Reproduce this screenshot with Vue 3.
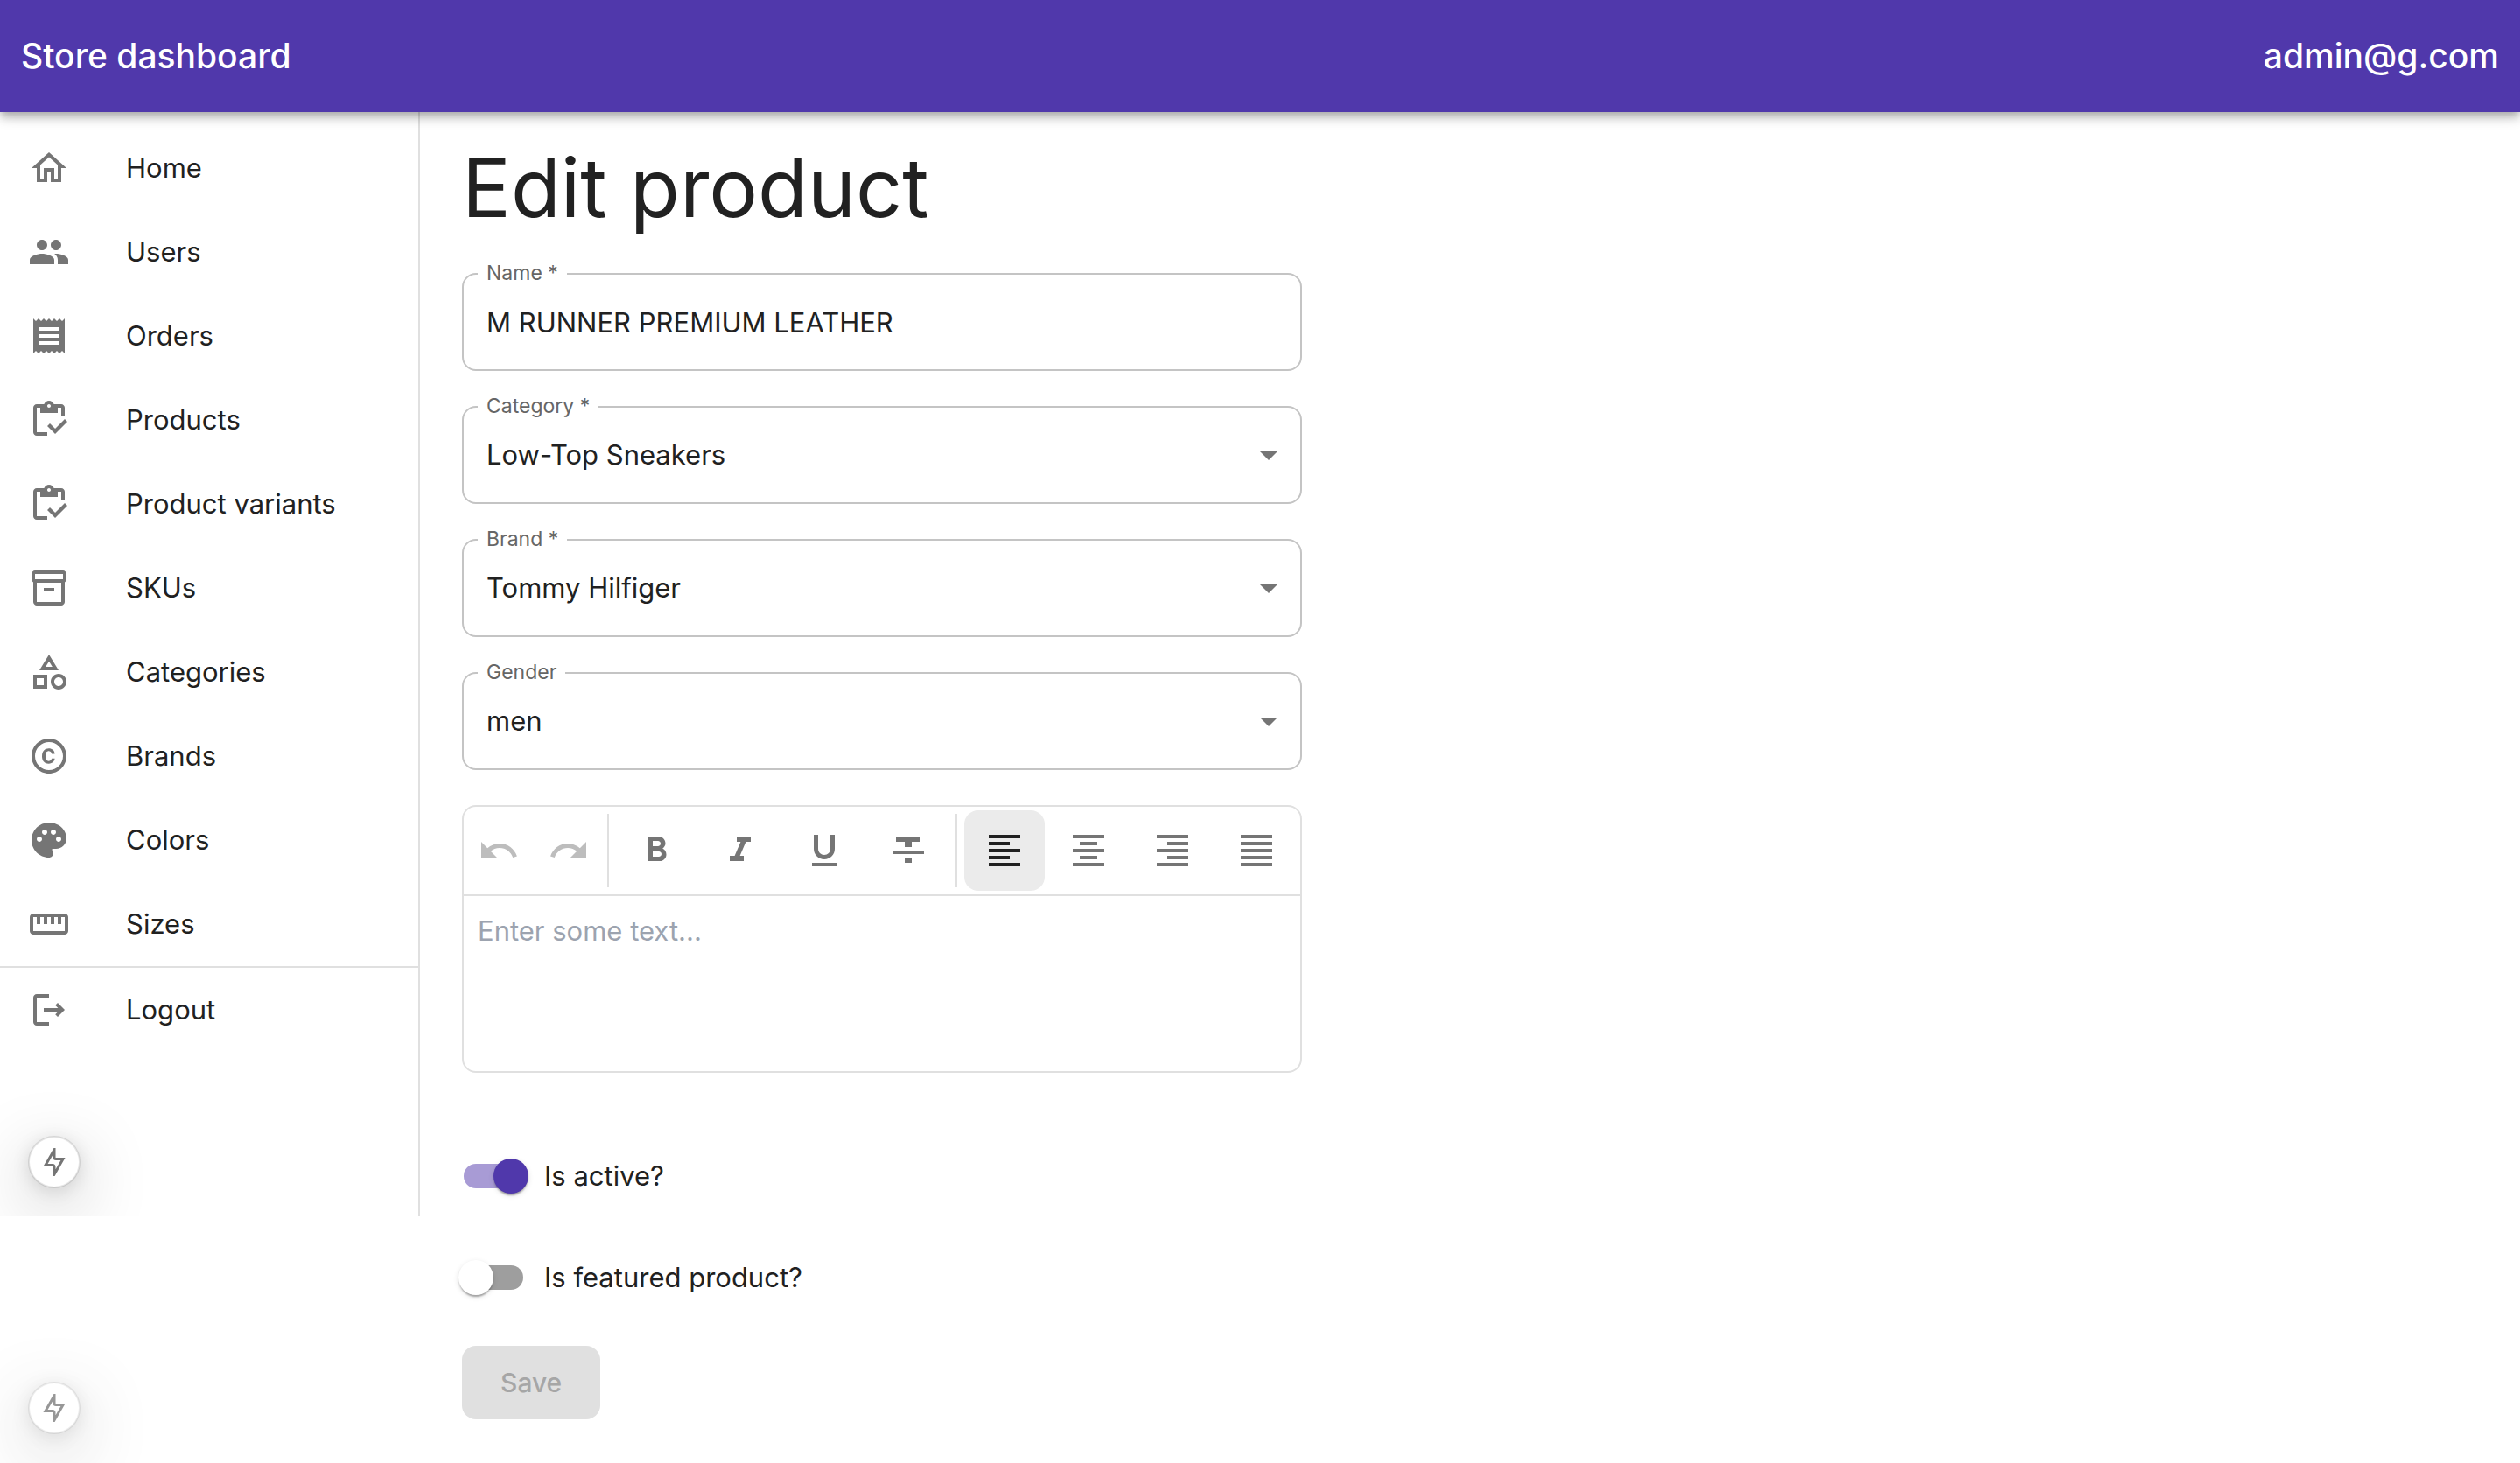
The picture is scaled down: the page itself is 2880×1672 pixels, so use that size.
<script setup>
import { ref } from 'vue'

const navItems = [
  { label: 'Home', path: 'm12 5.690 5 4.500V18h-2v-6H9v6H7v-7.810zM12 3 2 12h3v8h6v-6h2v6h6v-8h3z' },
  { label: 'Users', path: 'M16 11c1.660 0 2.990-1.340 2.990-3S17.660 5 16 5s-3 1.340-3 3 1.340 3 3 3m-8 0c1.660 0 2.990-1.340 2.990-3S9.660 5 8 5 5 6.340 5 8s1.340 3 3 3m0 2c-2.330 0-7 1.170-7 3.500V19h14v-2.500c0-2.330-4.670-3.500-7-3.500m8 0c-.29 0-.62.02-.97.05 1.160.84 1.970 1.970 1.970 3.450V19h6v-2.500c0-2.330-4.670-3.500-7-3.500' },
  { label: 'Orders', path: 'M18 17H6v-2h12zm0-4H6v-2h12zm0-4H6V7h12zM3 22l1.500-1.500L6 22l1.500-1.500L9 22l1.500-1.500L12 22l1.500-1.500L15 22l1.500-1.500L18 22l1.500-1.500L21 22V2l-1.500 1.500L18 2l-1.500 1.500L15 2l-1.500 1.500L12 2l-1.500 1.500L9 2 7.500 3.500 6 2 4.500 3.500 3 2z' },
  { label: 'Products', path: 'M5 5h2v3h10V5h2v5h2V5c0-1.100-.9-2-2-2h-4.180C14.400 1.840 13.300 1 12 1s-2.400.84-2.820 2H5c-1.100 0-2 .9-2 2v14c0 1.100.9 2 2 2h6v-2H5zm7-2c.55 0 1 .45 1 1s-.45 1-1 1-1-.45-1-1 .45-1 1-1M21 11.500 15.510 17l-3.010-3-1.500 1.500L15.510 20l6.990-7z' },
  { label: 'Product variants', path: 'M5 5h2v3h10V5h2v5h2V5c0-1.100-.9-2-2-2h-4.180C14.400 1.840 13.300 1 12 1s-2.400.84-2.820 2H5c-1.100 0-2 .9-2 2v14c0 1.100.9 2 2 2h6v-2H5zm7-2c.55 0 1 .45 1 1s-.45 1-1 1-1-.45-1-1 .45-1 1-1M21 11.500 15.510 17l-3.010-3-1.500 1.500L15.510 20l6.990-7z' },
  { label: 'SKUs', path: 'M20 2H4c-1 0-2 .9-2 2v3.010c0 .72.43 1.340 1 1.690V20c0 1.100 1.100 2 2 2h14c.9 0 2-.9 2-2V8.700c.57-.35 1-.97 1-1.690V4c0-1.100-1-2-2-2m-1 18H5V9h14zm1-13H4V4h16zM9 12h6v2H9z' },
  { label: 'Categories', path: 'm12 2-5.500 9h11zm0 3.840L13.930 9h-3.870zM17.500 13c-2.490 0-4.500 2.010-4.500 4.500s2.010 4.500 4.500 4.500 4.500-2.010 4.500-4.500-2.010-4.500-4.500-4.500m0 7c-1.380 0-2.500-1.120-2.500-2.500s1.120-2.500 2.500-2.500 2.500 1.120 2.500 2.500-1.120 2.500-2.500 2.500M3 21.500h8v-8H3zm2-6h4v4H5z' },
  { label: 'Brands', path: 'M11.880 9.140c1.280.06 1.610 1.150 1.630 1.660h1.790c-.08-1.980-1.490-3.190-3.450-3.190C9.640 7.610 8 9 8 12.140c0 1.940.93 4.240 3.840 4.240 2.220 0 3.410-1.650 3.440-2.950h-1.790c-.03.59-.45 1.380-1.630 1.440-1.310-.04-1.860-1.060-1.860-2.730 0-2.890 1.280-2.980 1.880-3M12 2C6.480 2 2 6.480 2 12s4.480 10 10 10 10-4.480 10-10S17.520 2 12 2m0 18c-4.410 0-8-3.590-8-8s3.590-8 8-8 8 3.590 8 8-3.590 8-8 8' },
  { label: 'Colors', path: 'M12 2C6.490 2 2 6.490 2 12s4.490 10 10 10c1.380 0 2.500-1.120 2.500-2.500 0-.61-.23-1.200-.64-1.670-.08-.1-.13-.21-.13-.33 0-.28.22-.5.5-.5H16c3.310 0 6-2.690 6-6 0-4.960-4.490-9-10-9m5.500 11c-.83 0-1.500-.67-1.500-1.500s.67-1.500 1.500-1.500 1.500.67 1.500 1.500-.67 1.500-1.500 1.500m-3-4c-.83 0-1.500-.67-1.500-1.500S13.670 6 14.500 6s1.500.67 1.500 1.500S15.330 9 14.500 9M5 11.500c0-.83.67-1.500 1.500-1.500s1.500.67 1.500 1.500S7.330 13 6.500 13 5 12.330 5 11.500m6-4c0 .83-.67 1.500-1.500 1.500S8 8.330 8 7.500 8.670 6 9.500 6s1.500.67 1.500 1.500' },
  { label: 'Sizes', path: 'M21 6H3c-1.100 0-2 .9-2 2v8c0 1.100.9 2 2 2h18c1.100 0 2-.9 2-2V8c0-1.100-.9-2-2-2m0 10H3V8h2v4h2V8h2v4h2V8h2v4h2V8h2v4h2V8h2z' }
]
const logoutPath = 'M5 5h7V3H5c-1.100 0-2 .9-2 2v14c0 1.100.9 2 2 2h7v-2H5zm16 7-4-4-1.400 1.400L17.200 11H9v2h8.200l-1.600 1.600L17 16z'

const history = [
  { label: 'Undo', path: 'M12.500 8c-2.650 0-5.050.99-6.900 2.600L2 7v9h9l-3.620-3.620c1.390-1.160 3.160-1.880 5.120-1.880 3.540 0 6.550 2.310 7.600 5.500l2.370-.78C21.080 11.030 17.150 8 12.500 8' },
  { label: 'Redo', path: 'M18.400 10.600C16.550 8.990 14.150 8 11.500 8c-4.650 0-8.580 3.030-9.960 7.220L3.900 16c1.050-3.190 4.050-5.500 7.600-5.500 1.950 0 3.730.72 5.120 1.880L13 16h9V7z' }
]
const formats = [
  { label: 'Bold', path: 'M15.600 10.790c.97-.67 1.650-1.770 1.650-2.790 0-2.260-1.750-4-4-4H7v14h7.040c2.090 0 3.710-1.700 3.710-3.790 0-1.520-.86-2.820-2.150-3.420M10 6.500h3c.83 0 1.500.67 1.500 1.500s-.67 1.500-1.500 1.500h-3zm3.500 9H10v-3h3.500c.83 0 1.500.67 1.500 1.500s-.67 1.500-1.500 1.500' },
  { label: 'Italic', path: 'M10 4v3h2.210l-3.420 8H6v3h8v-3h-2.210l3.420-8H18V4z' },
  { label: 'Underline', path: 'M12 17c3.310 0 6-2.690 6-6V3h-2.500v8c0 1.930-1.570 3.500-3.500 3.500S8.500 12.930 8.500 11V3H6v8c0 3.310 2.690 6 6 6m-7 2v2h14v-2z' },
  { label: 'Strikethrough', path: 'M10 19h4v-3h-4zM5 4v3h5v3h4V7h5V4zM3 14h18v-2H3z' }
]
const alignments = [
  { label: 'Align left', path: 'M15 15H3v2h12zm0-8H3v2h12zM3 13h18v-2H3zm0 8h18v-2H3zM3 3v2h18V3z' },
  { label: 'Align center', path: 'M7 15v2h10v-2zm-4 6h18v-2H3zm0-8h18v-2H3zm4-6v2h10V7zM3 3v2h18V3z' },
  { label: 'Align right', path: 'M3 21h18v-2H3zm6-4h12v-2H9zm-6-4h18v-2H3zm6-4h12V7H9zM3 3v2h18V3z' },
  { label: 'Justify', path: 'M3 21h18v-2H3zm0-4h18v-2H3zm0-4h18v-2H3zm0-4h18V7H3zm0-6v2h18V3z' }
]
const boltPath = 'M18 2 8 19.500h8q2 0 2 2V30l10-17.500h-8q-2 0-2-2z'

const name = ref('M RUNNER PREMIUM LEATHER')
const selects = ref([
  { id: 'category', label: 'Category *', value: 'Low-Top Sneakers' },
  { id: 'brand', label: 'Brand *', value: 'Tommy Hilfiger' },
  { id: 'gender', label: 'Gender', value: 'men' }
])
const alignment = ref('Align left')
const description = ref('')
const isActive = ref(true)
const isFeatured = ref(false)
</script>

<template>
  <header class="app-bar">
    <span>Store dashboard</span>
    <span>admin@g.com</span>
  </header>
  <div class="layout">
    <div class="side">
      <aside class="drawer">
        <nav>
          <ul class="nav-list">
            <li v-for="item in navItems" :key="item.label">
              <a class="nav-link" href="#">
                <svg class="icon" viewBox="0 0 24 24"><path :d="item.path" /></svg>
                <span>{{ item.label }}</span>
              </a>
            </li>
            <li class="nav-end">
              <a class="nav-link" href="#">
                <svg class="icon" viewBox="0 0 24 24"><path :d="logoutPath" /></svg>
                <span>Logout</span>
              </a>
            </li>
          </ul>
        </nav>
        <button class="bolt" type="button" aria-label="Route status">
          <svg viewBox="0 0 36 32"><path :d="boltPath" /></svg>
        </button>
      </aside>
      <div class="side-foot">
        <button class="bolt faded" type="button" aria-label="Build status">
          <svg viewBox="0 0 36 32"><path :d="boltPath" /></svg>
        </button>
      </div>
    </div>

    <main class="content">
      <h1>Edit product</h1>
      <form class="form" @submit.prevent>
        <div class="field">
          <label for="name">Name *</label>
          <input id="name" v-model="name" type="text" />
        </div>
        <div v-for="field in selects" :key="field.id" class="field">
          <label :for="field.id">{{ field.label }}</label>
          <select :id="field.id" v-model="field.value">
            <option>{{ field.value }}</option>
          </select>
          <svg class="icon arrow" viewBox="0 0 24 24"><path d="m7 10 5 5 5-5z" /></svg>
        </div>

        <div class="editor">
          <div class="toolbar">
            <div class="history">
              <button v-for="tool in history" :key="tool.label" type="button" :aria-label="tool.label" disabled>
                <svg class="icon" viewBox="0 0 24 24"><path :d="tool.path" /></svg>
              </button>
            </div>
            <div class="tools">
              <button v-for="tool in formats" :key="tool.label" type="button" :aria-label="tool.label">
                <svg class="icon" viewBox="0 0 24 24"><path :d="tool.path" /></svg>
              </button>
            </div>
            <div class="tools">
              <button
                v-for="tool in alignments"
                :key="tool.label"
                type="button"
                :aria-label="tool.label"
                :class="{ selected: alignment === tool.label }"
                @click="alignment = tool.label"
              >
                <svg class="icon" viewBox="0 0 24 24"><path :d="tool.path" /></svg>
              </button>
            </div>
          </div>
          <textarea v-model="description" aria-label="Description" placeholder="Enter some text..."></textarea>
        </div>

        <div class="switches">
          <label class="switch"><input v-model="isActive" type="checkbox" /><span>Is active?</span></label>
          <label class="switch"><input v-model="isFeatured" type="checkbox" /><span>Is featured product?</span></label>
        </div>
        <button class="save" type="submit" disabled>Save</button>
      </form>
    </main>
  </div>
</template>

<style>
body {
  background: #fff;
  color: #212121;
  font: 400 31px/48px Inter, "Liberation Sans", sans-serif;
}
</style>

<style scoped>
* {
  box-sizing: border-box;
}
button,
input,
select,
textarea {
  font: inherit;
  color: inherit;
}
button {
  padding: 0;
  border: 0;
  background: none;
}
.icon {
  display: block;
  flex: none;
  width: 48px;
  height: 48px;
  fill: #757575;
}
.app-bar {
  position: relative;
  z-index: 1;
  display: flex;
  align-items: center;
  justify-content: space-between;
  height: 128px;
  padding: 0 24px;
  background: #5038ab;
  color: #fff;
  font-size: 39px;
  font-weight: 500;
  box-shadow: 0 4px 8px -2px rgba(0, 0, 0, 0.2), 0 8px 10px rgba(0, 0, 0, 0.14), 0 2px 20px rgba(0, 0, 0, 0.12);
}
.layout {
  display: flex;
}
.side {
  flex: none;
  width: 480px;
}
.drawer {
  overflow: hidden;
  padding: 16px 0 32px;
  border-right: 2px solid #e0e0e0;
}
.nav-list {
  margin: 0 0 96px;
  padding: 0;
  list-style: none;
}
.nav-link {
  display: flex;
  align-items: center;
  gap: 64px;
  height: 96px;
  padding: 0 32px;
  color: inherit;
  text-decoration: none;
}
.nav-end {
  border-top: 2px solid #e0e0e0;
}
.bolt {
  display: flex;
  align-items: center;
  justify-content: center;
  width: 60px;
  height: 60px;
  margin-left: 32px;
  border: 2px solid rgba(0, 0, 0, 0.1);
  border-radius: 50%;
  background: #fff;
  background-clip: padding-box;
  box-shadow: 0 22px 80px rgba(0, 0, 0, 0.25), 0 4px 20px rgba(0, 0, 0, 0.12);
}
.bolt svg {
  flex: none;
  width: 36px;
  height: 32px;
  fill: none;
  stroke: #757575;
  stroke-width: 3px;
}
.bolt.faded {
  opacity: 0.75;
}
.side-foot {
  overflow: hidden;
  padding: 189px 0 33px;
}
.content {
  flex: 1;
  padding: 30px 48px 48px;
}
h1 {
  margin: 0 0 42px;
  font-size: 93px;
  font-weight: 400;
  line-height: 112px;
}
.form {
  display: flex;
  flex-direction: column;
  gap: 40px;
  max-width: 960px;
}
.field {
  position: relative;
}
.field label {
  position: absolute;
  top: -16px;
  left: 18px;
  padding: 0 10px;
  background: #fff;
  color: #666;
  font-size: 23px;
  line-height: 32px;
}
.field input,
.field select {
  display: block;
  width: 100%;
  height: 112px;
  margin: 0;
  padding: 0 26px;
  border: 2px solid #c4c4c4;
  border-radius: 16px;
  background: none;
  appearance: none;
}
.arrow {
  position: absolute;
  top: 32px;
  right: 14px;
  pointer-events: none;
}
.editor {
  border: 2px solid #e0e0e0;
  border-radius: 16px;
}
.toolbar {
  display: flex;
  align-items: center;
  height: 102px;
  border-bottom: 2px solid #e0e0e0;
}
.history {
  display: flex;
  margin-right: 4px;
}
.history button {
  padding: 16px;
}
.history .icon {
  fill: #bdbdbd;
}
.tools {
  display: flex;
  align-items: center;
  gap: 4px;
  height: 84px;
  padding: 0 8px;
  border-left: 2px solid #e0e0e0;
}
.tools button {
  padding: 22px;
  border-radius: 16px;
}
.tools .selected {
  background: #ebebeb;
}
.selected .icon {
  fill: #212121;
}
textarea {
  display: block;
  width: 100%;
  height: 200px;
  padding: 16px;
  border: 0;
  background: none;
  resize: none;
}
textarea::placeholder {
  color: #9ca3af;
}
.switches {
  display: flex;
  flex-direction: column;
  gap: 40px;
  padding: 40px 0 0;
}
.switch {
  display: flex;
  align-items: center;
  gap: 24px;
  height: 76px;
}
.switch input {
  position: relative;
  width: 68px;
  height: 28px;
  margin: 0 0 0 2px;
  border-radius: 14px;
  background: #9e9e9e;
  appearance: none;
}
.switch input::before {
  content: "";
  position: absolute;
  top: -6px;
  left: -6px;
  width: 40px;
  height: 40px;
  border-radius: 50%;
  background: #fff;
  box-shadow: 0 4px 2px -2px rgba(0, 0, 0, 0.2), 0 2px 2px rgba(0, 0, 0, 0.14), 0 2px 6px rgba(0, 0, 0, 0.12);
}
.switch input:checked {
  background: #a89bd5;
}
.switch input:checked::before {
  left: 34px;
  background: #5038ab;
}
.save {
  align-self: flex-start;
  padding: 18px 44px;
  border-radius: 16px;
  background: #e0e0e0;
  color: #a6a6a6;
  font-size: 30px;
  font-weight: 500;
}
</style>
